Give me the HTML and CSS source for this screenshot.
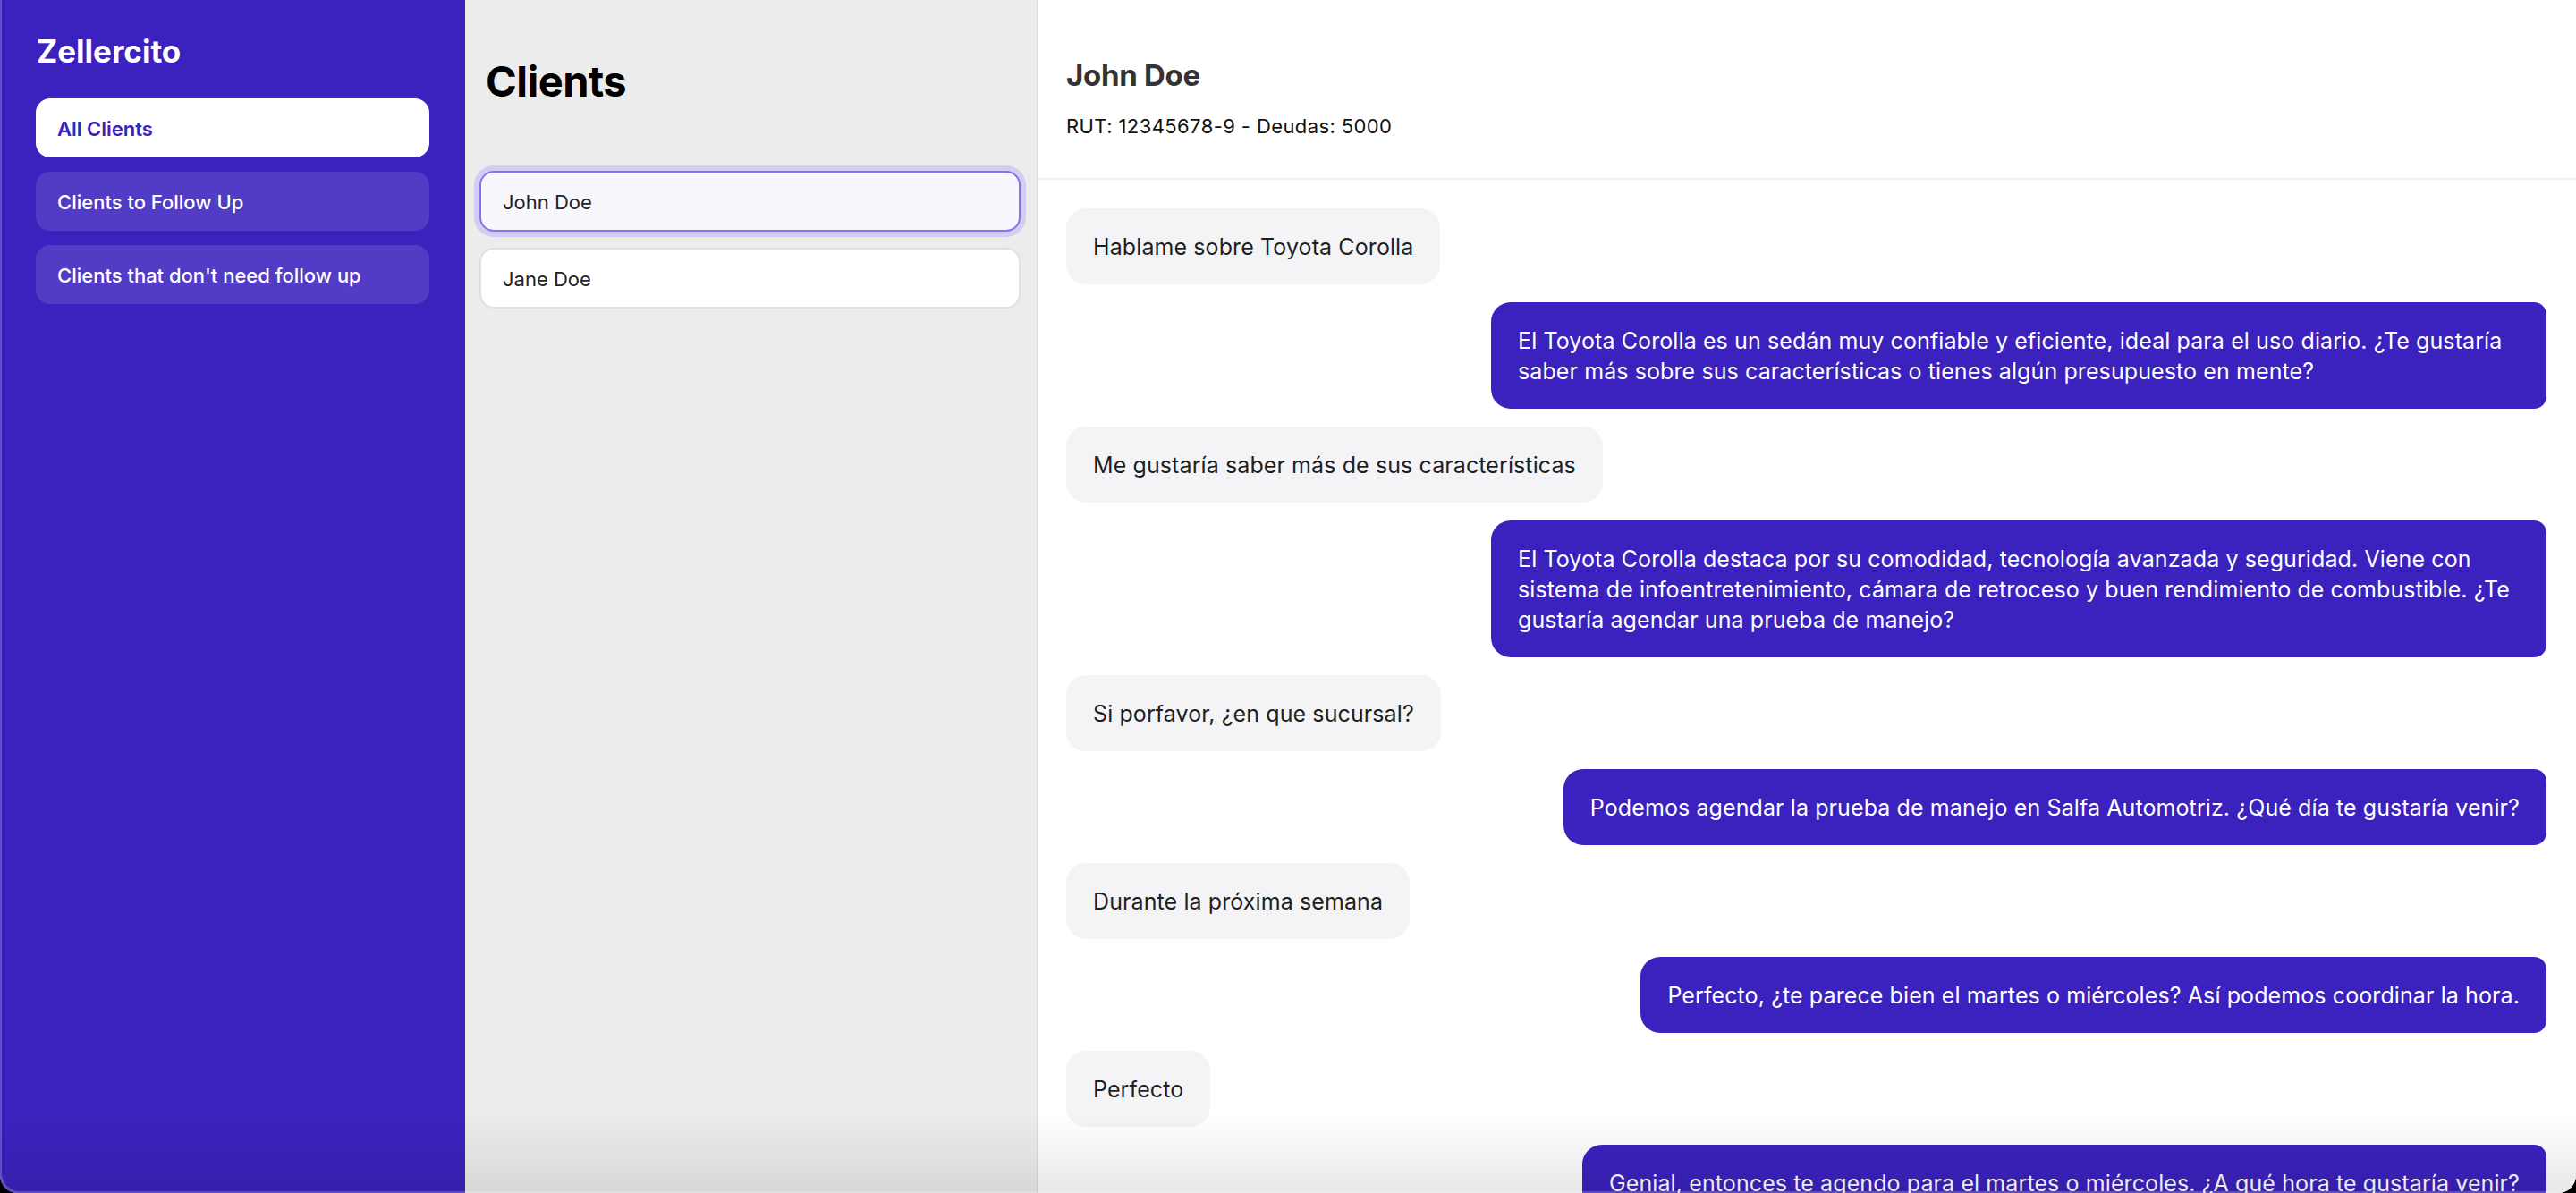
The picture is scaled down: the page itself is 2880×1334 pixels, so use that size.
FILE: index.html
```html
<!DOCTYPE html>
<html lang="es">
<head>
<meta charset="utf-8">
<title>Zellercito</title>
<link rel="stylesheet" href="styles.css">
</head>
<body>
<div class="window">
  <aside class="sidebar">
    <h1 class="brand">Zellercito</h1>
    <nav class="nav">
      <a class="nav-item active">All Clients</a>
      <a class="nav-item">Clients to Follow Up</a>
      <a class="nav-item">Clients that don't need follow up</a>
    </nav>
  </aside>

  <section class="clients">
    <h2 class="clients-title">Clients</h2>
    <ul class="client-list">
      <li class="client-card selected">John Doe</li>
      <li class="client-card">Jane Doe</li>
    </ul>
  </section>

  <main class="chat">
    <header class="chat-header">
      <h2 class="chat-name">John Doe</h2>
      <p class="chat-meta">RUT: 12345678-9 - Deudas: 5000</p>
    </header>
    <div class="messages">
      <div class="msg user">Hablame sobre Toyota Corolla</div>
      <div class="msg bot">El Toyota Corolla es un sedán muy confiable y eficiente, ideal para el uso diario. ¿Te gustaría saber más sobre sus características o tienes algún presupuesto en mente?</div>
      <div class="msg user">Me gustaría saber más de sus características</div>
      <div class="msg bot">El Toyota Corolla destaca por su comodidad, tecnología avanzada y seguridad. Viene con sistema de infoentretenimiento, cámara de retroceso y buen rendimiento de combustible. ¿Te gustaría agendar una prueba de manejo?</div>
      <div class="msg user">Si porfavor, ¿en que sucursal?</div>
      <div class="msg bot">Podemos agendar la prueba de manejo en Salfa Automotriz. ¿Qué día te gustaría venir?</div>
      <div class="msg user">Durante la próxima semana</div>
      <div class="msg bot">Perfecto, ¿te parece bien el martes o miércoles? Así podemos coordinar la hora.</div>
      <div class="msg user">Perfecto</div>
      <div class="msg bot">Genial, entonces te agendo para el martes o miércoles. ¿A qué hora te gustaría venir?</div>
    </div>
  </main>

  <div class="bottom-fade"></div>
</div>
</body>
</html>
```

FILE: styles.css
```css
* {
  box-sizing: border-box;
}

html, body {
  margin: 0;
  padding: 0;
  background: #000;
}

body {
  font-family: Inter, "Noto Sans", "Liberation Sans", sans-serif;
  color: #1f1f1f;
}

.window {
  position: relative;
  width: 2880px;
  height: 1334px;
  display: flex;
  overflow: hidden;
  border-radius: 0 0 20px 20px;
  background: #fff;
}

.window::after {
  content: "";
  position: absolute;
  inset: 0;
  border-radius: 0 0 20px 20px;
  box-shadow: inset 2px -2px 0 rgba(255, 255, 255, 0.2);
  pointer-events: none;
}

/* Sidebar */
.sidebar {
  flex: 0 0 520px;
  background: #3b22be;
  padding: 36px 40px 0;
}

.brand {
  margin: 0 0 32px;
  font-size: 35px;
  line-height: 42px;
  font-weight: 700;
  color: #fff;
  padding-left: 1px;
}

.nav {
  display: flex;
  flex-direction: column;
  gap: 16px;
}

.nav-item {
  display: block;
  height: 66px;
  padding: 22px 24px 0;
  border-radius: 16px;
  font-size: 22px;
  line-height: 24px;
  font-weight: 500;
  color: #fff;
  background: rgba(255, 255, 255, 0.12);
}

.nav-item.active {
  background: #fff;
  color: #3b22be;
  font-weight: 600;
}

/* Clients list */
.clients {
  flex: 0 0 640px;
  background: #ececec;
  border-right: 1px solid #dcdcdc;
  padding: 63px 18px 0 16px;
}

.clients-title {
  margin: 0 0 72px;
  padding-left: 7px;
  font-size: 47px;
  line-height: 56px;
  font-weight: 700;
  color: #000;
  letter-spacing: -0.5px;
}

.client-list {
  list-style: none;
  margin: 0;
  padding: 0;
  display: flex;
  flex-direction: column;
  gap: 18px;
}

.client-card {
  height: 68px;
  padding: 20px 24px 0;
  border: 2px solid #e0e0e0;
  border-radius: 16px;
  background: #fff;
  font-size: 22px;
  line-height: 26px;
  color: #222;
}

.client-card.selected {
  border-color: #8d6ef2;
  background: #f9f7fe;
  box-shadow: 0 0 0 6px #d5ccf1;
}

/* Chat */
.chat {
  flex: 1 1 auto;
  display: flex;
  flex-direction: column;
  min-width: 0;
  background: #fff;
}

.chat-header {
  padding: 64px 32px 45px;
  border-bottom: 2px solid #efefef;
}

.chat-name {
  margin: 0 0 24px;
  font-size: 33px;
  line-height: 40px;
  font-weight: 700;
  color: #333;
  letter-spacing: -0.3px;
}

.chat-meta {
  margin: 0;
  font-size: 22px;
  line-height: 26px;
  letter-spacing: 0.4px;
  color: #111;
}

.messages {
  display: flex;
  flex-direction: column;
  align-items: flex-start;
  gap: 20px;
  padding: 32px 33px 0 32px;
}

.msg {
  padding: 25.5px 30px;
  border-radius: 22px;
  font-size: 25px;
  line-height: 34px;
  letter-spacing: 0.1px;
  max-width: 1180px;
}

.msg.user {
  background: #f4f4f6;
  color: #1f1f1f;
}

.msg.bot {
  align-self: flex-end;
  background: #3b22be;
  color: #fff;
  border-radius: 22px 14px 14px 22px;
}

.bottom-fade {
  position: absolute;
  left: 0;
  right: 0;
  bottom: 0;
  height: 90px;
  background: linear-gradient(to bottom, rgba(0, 0, 0, 0), rgba(0, 0, 0, 0.09));
  pointer-events: none;
}
```
